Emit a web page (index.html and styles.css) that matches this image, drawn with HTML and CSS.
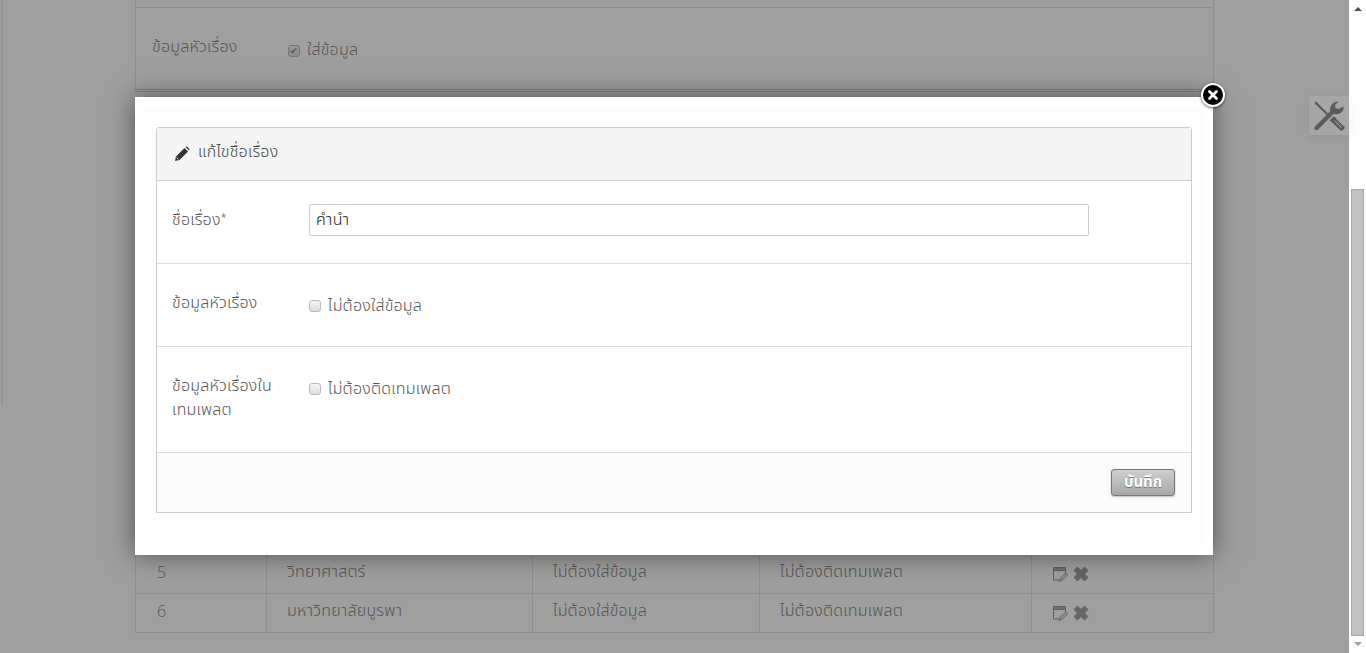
FILE: index.html
```html
<!DOCTYPE html>
<html lang="th">
<head>
<meta charset="utf-8">
<title>แก้ไขชื่อเรื่อง</title>
<link rel="stylesheet" href="styles.css">
</head>
<body>
<div class="viewport">
  <div class="page">
    <div class="sidebar-edge"></div>
    <main class="main">
      <section class="bg-panel">
        <div class="bg-row-top"></div>
        <div class="bg-row">
          <span class="bg-label">ข้อมูลหัวเรื่อง</span>
          <label class="bg-check"><input type="checkbox" checked disabled> ใส่ข้อมูล</label>
        </div>
      </section>
      <table class="bg-table">
        <colgroup><col class="c1"><col class="c2"><col class="c3"><col class="c4"><col class="c5"></colgroup>
        <tr>
          <td>5</td><td>วิทยาศาสตร์</td><td>ไม่ต้องใส่ข้อมูล</td><td>ไม่ต้องติดเทมเพลต</td>
          <td><span class="actions">
            <svg class="ic-edit" viewBox="0 0 16 16"><path d="M1 1h13v3H1z" fill="#b5b5b5"/><path d="M1.500 1.500h12v3M1.500 1.500v12.500h7M13.500 1.500v6M1.500 4.500h12" fill="none" stroke="#999"/><path d="M7 15.500l1-3 6-6 2 2-6 6z" fill="#ddd" stroke="#999" stroke-width=".8"/></svg>
            <svg class="ic-x" viewBox="0 0 16 16"><path d="M4.500 1.500L8 5l3.500-3.500 3 3L11 8l3.500 3.500-3 3L8 11l-3.500 3.500-3-3L5 8 1.500 4.500z" fill="#a4a4a4" stroke="#a4a4a4" stroke-linejoin="round" stroke-width="1.500"/></svg>
          </span></td>
        </tr>
        <tr>
          <td>6</td><td>มหาวิทยาลัยบูรพา</td><td>ไม่ต้องใส่ข้อมูล</td><td>ไม่ต้องติดเทมเพลต</td>
          <td><span class="actions">
            <svg class="ic-edit" viewBox="0 0 16 16"><path d="M1 1h13v3H1z" fill="#b5b5b5"/><path d="M1.500 1.500h12v3M1.500 1.500v12.500h7M13.500 1.500v6M1.500 4.500h12" fill="none" stroke="#999"/><path d="M7 15.500l1-3 6-6 2 2-6 6z" fill="#ddd" stroke="#999" stroke-width=".8"/></svg>
            <svg class="ic-x" viewBox="0 0 16 16"><path d="M4.500 1.500L8 5l3.500-3.500 3 3L11 8l3.500 3.500-3 3L8 11l-3.500 3.500-3-3L5 8 1.500 4.500z" fill="#a4a4a4" stroke="#a4a4a4" stroke-linejoin="round" stroke-width="1.500"/></svg>
          </span></td>
        </tr>
      </table>
    </main>
  </div>
  <div class="overlay"></div>
  <div class="tools-tab">
    <svg viewBox="0 0 32 32" width="32" height="32">
      <path d="M2 3.500L3.500 2 18 16.500 16.500 18z" fill="#5c5c5c"/>
      <path d="M1.500 2.500L3 1.500l1.500 2-1.500 1.500z" fill="#5c5c5c"/>
      <path d="M3.500 28L20 11.500" stroke="#5c5c5c" stroke-width="4.500" stroke-linecap="round"/>
      <path d="M30.500 6.500c.8 4.500-3.500 9-9 7.500l-4-3c-1.500-4.500 2.500-10 8.500-9.500l-4 3.500.5 3 3 1z" fill="#5c5c5c"/>
      <path d="M16.500 20.500l4-4 1.500.5 9.500 9.500c1 1.500-2.500 5-4 4L18 21.500z" fill="#5c5c5c"/>
      <path d="M21.500 20.500l7 7M23.500 18.800l7 7" stroke="#a6a6a6" stroke-width="1"/>
    </svg>
  </div>
  <div class="modal">
    <button class="close" aria-label="ปิด">
      <svg viewBox="0 0 12 12" width="12" height="12"><path d="M2.500 2.500l7 7M9.500 2.500l-7 7" stroke="#fff" stroke-width="2.800" stroke-linecap="round"/></svg>
    </button>
    <form class="panel">
      <header class="panel-head">
        <svg class="ic-pencil" viewBox="0 0 16 16" width="16" height="16"><path d="M1 15l1-4.500L10.500 2l3.500 3.500L5.500 14z" fill="#333"/><path d="M11.500 1l1-.5c.5 0 3 2.500 3 3l-.5 1z" fill="#333"/><path d="M2.500 11.500l2 2" stroke="#fff" stroke-width=".8"/></svg>
        <span>แก้ไขชื่อเรื่อง</span>
      </header>
      <div class="field f-name">
        <label class="field-label">ชื่อเรื่อง*</label>
        <input class="text-input" type="text" value="คำนำ">
      </div>
      <div class="field f-head">
        <label class="field-label">ข้อมูลหัวเรื่อง</label>
        <label class="check"><input type="checkbox"> ไม่ต้องใส่ข้อมูล</label>
      </div>
      <div class="field f-tpl">
        <label class="field-label">ข้อมูลหัวเรื่องใน<br>เทมเพลต</label>
        <label class="check"><input type="checkbox"> ไม่ต้องติดเทมเพลต</label>
      </div>
      <footer class="panel-foot">
        <button class="save" type="button">บันทึก</button>
      </footer>
    </form>
  </div>
  <div class="scrollbar">
    <div class="arrow up"></div>
    <div class="track"><div class="thumb"></div></div>
    <div class="arrow down"></div>
  </div>
</div>
</body>
</html>
```
FILE: styles.css
```css
* { box-sizing: border-box; }
html, body { margin: 0; height: 100%; overflow: hidden; }
body {
  font-family: "Open Sans", "Noto Sans Thai", "Noto Sans", "DejaVu Sans", sans-serif;
  font-size: 16px;
  font-weight: 300;
  font-stretch: 85%;
  letter-spacing: .22px;
  color: #555;
  background: #fff;
}
.viewport { position: relative; width: 1366px; height: 653px; display: flex; overflow: hidden; }
.page { width: 1349px; height: 653px; display: flex; flex: none; background: #fff; }
.sidebar-edge { width: 2px; height: 405px; margin-left: 1px; background: #eee; flex: none; }
.main { margin-left: 132px; width: 1079px; flex: none; }
.bg-panel { height: 92px; border: 1px solid #e4e4e4; border-top: 0; border-bottom: 3px double #d0d0d0; color: #888; }
.bg-row-top { height: 8px; border-bottom: 1px solid #e4e4e4; }
.bg-row { display: flex; padding: 27px 16px 0; }
.bg-label { width: 136px; }
.bg-check { display: flex; align-items: center; gap: 7px; margin-top: 3px; height: 24px; }
.bg-check input, .check input {
  appearance: none; margin: 0; width: 12px; height: 12px; flex: none;
  border: 1px solid #bbb; border-radius: 3px;
  background: linear-gradient(#f4f4f4, #dedede);
  display: flex; align-items: center; justify-content: center;
}
.bg-check input { margin-top: 2px; }
.bg-check input:checked::after { content: "✔"; font-size: 9px; line-height: 10px; color: #888; }
.bg-table { margin-top: 463px; width: 1079px; border-collapse: separate; border-spacing: 0; table-layout: fixed; color: #888; }
.bg-table td { border-right: 1px solid #e4e4e4; border-bottom: 1px solid #e4e4e4; height: 39px; padding: 0 20px 5px; }
.bg-table td:first-child { padding-left: 21px; border-left: 1px solid #e4e4e4; font-stretch: 100%; }
.c1 { width: 132px; } .c2 { width: 266px; } .c3 { width: 227px; } .c4 { width: 272px; } .c5 { width: 182px; }
.actions { display: flex; gap: 5px; align-items: center; margin-top: 5px; }
.ic-edit, .ic-x { width: 16px; height: 16px; }
.tools-tab {
  position: absolute; left: 1309px; top: 96px; width: 40px; height: 39px;
  background: #a6a6a6; display: flex; align-items: center; justify-content: center;
  box-shadow: 0 3px 8px rgba(0,0,0,.06);
}
.overlay { position: absolute; left: 0; top: 0; width: 1349px; height: 653px; background: rgba(0,0,0,.375); }
.modal {
  position: absolute; left: 135px; top: 97px; width: 1078px; height: 458px;
  background: #fdfdfd; border: 10px solid #fff; padding: 20px 11px 0;
  box-shadow: 0 0 25px rgba(0,0,0,.5);
}
.close {
  position: absolute; left: 1056px; top: -24px; width: 24px; height: 24px; padding: 0;
  border: 2px solid #fff; border-radius: 50%; background: #000;
  display: flex; align-items: center; justify-content: center;
  box-shadow: 0 1px 3px rgba(0,0,0,.6);
}
.panel { width: 1036px; height: 386px; background: #fff; border: 1px solid #ccc; border-radius: 3px 3px 0 0; display: flex; flex-direction: column; }
.panel-head {
  height: 53px; flex: none; display: flex; align-items: center; gap: 8px; padding: 0 0 4px 17px;
  border-bottom: 1px solid #ccc; color: #444;
  background-color: #f6f6f6;
  background-image: repeating-conic-gradient(#f2f2f2 0 25%, #f8f8f8 0 50%);
  background-size: 4px 4px;
}
.ic-pencil { margin-top: 4px; }
.field { display: flex; padding-left: 15px; border-bottom: 1px solid #ddd; flex: none; }
.f-name { height: 83px; padding-top: 23px; }
.f-head { height: 83px; padding-top: 26px; }
.f-tpl { height: 106px; padding-top: 26px; }
.field-label { width: 137px; line-height: 24px; flex: none; color: #555; }
.f-name .field-label { padding-top: 3px; }
.text-input {
  width: 780px; height: 32px; border: 1px solid #ccc; border-radius: 2px; padding: 0 6px;
  font-family: inherit; font-size: 16px; font-weight: 300; font-stretch: 85%; letter-spacing: .4px; color: #222; background: #fff;
}
.check { display: flex; align-items: center; gap: 7px; height: 30px; margin-top: 1px; color: #555; }
.panel-foot { flex: 1; display: flex; justify-content: flex-end; align-items: flex-start; padding: 16px 16px 0 0; background: #fcfcfc; }
.save {
  width: 64px; height: 27px; padding: 0; font-family: inherit; font-size: 15px; font-weight: 700; font-stretch: 85%; color: #fff;
  text-shadow: 0 1px 1px rgba(0,0,0,.4);
  border: 1px solid #777; border-radius: 3px; background: linear-gradient(#cfcfcf, #a8a8a8);
  box-shadow: 0 1px 2px rgba(0,0,0,.25);
}
.scrollbar { width: 17px; height: 653px; background: #fdfdfd; display: flex; flex-direction: column; flex: none; }
.arrow { height: 17px; flex: none; position: relative; }
.arrow::after { content: ""; position: absolute; left: 5px; border-left: 4px solid transparent; border-right: 4px solid transparent; }
.arrow.up::after { top: 7px; border-bottom: 4px solid #505050; }
.arrow.down::after { top: 6px; border-top: 4px solid #a0a0a0; }
.track { flex: 1; padding-top: 172px; padding-left: 2px; }
.thumb { width: 13px; height: 447px; background: #c1c1c1; border: 1px solid #a8a8a8; }
```
